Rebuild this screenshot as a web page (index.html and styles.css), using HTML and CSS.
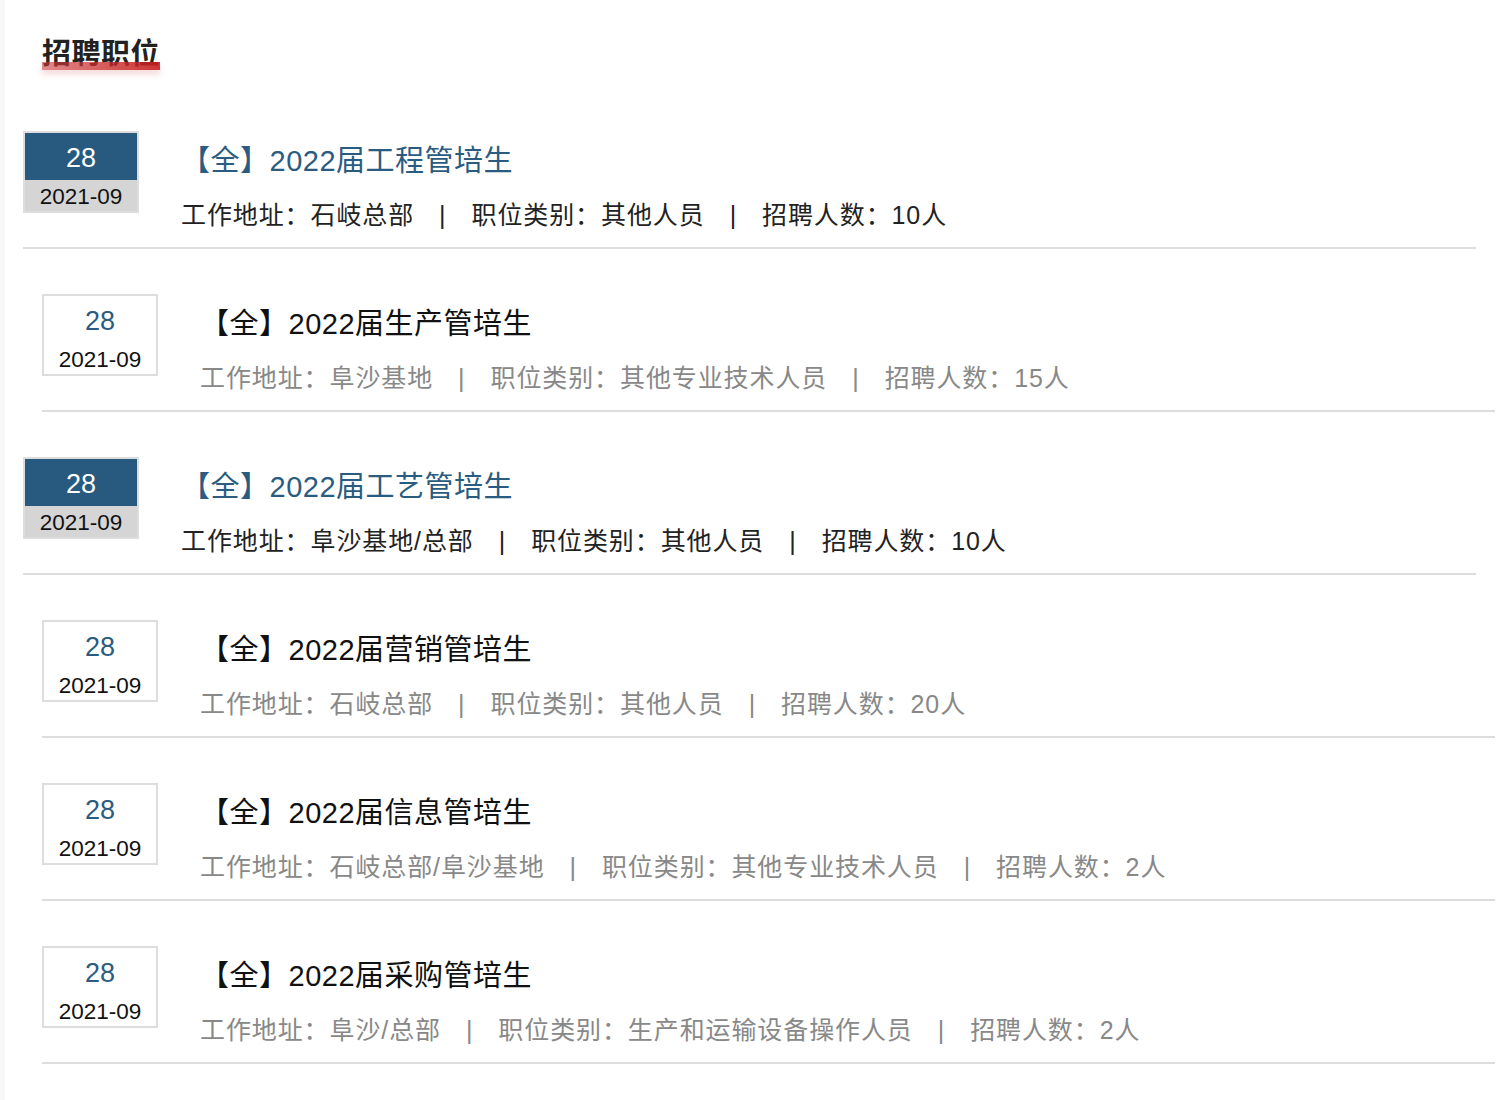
FILE: index.html
```html
<!DOCTYPE html>
<html lang="zh-CN">
<head>
    <meta charset="UTF-8">
    <meta name="viewport" content="width=device-width, initial-scale=1.0">
    <title>招聘职位</title>
    <link rel="stylesheet" href="styles.css">
</head>
<body>
    <div class="page">
        <h2 class="section-title"><span>招聘职位</span></h2>

        <ul class="job-list">
            <li class="job active">
                <div class="job-date">
                    <div class="day">28</div>
                    <div class="month">2021-09</div>
                </div>
                <div class="job-info">
                    <div class="job-name">【全】2022届工程管培生</div>
                    <div class="job-meta">
                        <span>工作地址：石岐总部</span><span class="sep">|</span><span>职位类别：其他人员</span><span class="sep">|</span><span>招聘人数：10人</span>
                    </div>
                </div>
            </li>
            <li class="job">
                <div class="job-date">
                    <div class="day">28</div>
                    <div class="month">2021-09</div>
                </div>
                <div class="job-info">
                    <div class="job-name">【全】2022届生产管培生</div>
                    <div class="job-meta">
                        <span>工作地址：阜沙基地</span><span class="sep">|</span><span>职位类别：其他专业技术人员</span><span class="sep">|</span><span>招聘人数：15人</span>
                    </div>
                </div>
            </li>
            <li class="job active">
                <div class="job-date">
                    <div class="day">28</div>
                    <div class="month">2021-09</div>
                </div>
                <div class="job-info">
                    <div class="job-name">【全】2022届工艺管培生</div>
                    <div class="job-meta">
                        <span>工作地址：阜沙基地/总部</span><span class="sep">|</span><span>职位类别：其他人员</span><span class="sep">|</span><span>招聘人数：10人</span>
                    </div>
                </div>
            </li>
            <li class="job">
                <div class="job-date">
                    <div class="day">28</div>
                    <div class="month">2021-09</div>
                </div>
                <div class="job-info">
                    <div class="job-name">【全】2022届营销管培生</div>
                    <div class="job-meta">
                        <span>工作地址：石岐总部</span><span class="sep">|</span><span>职位类别：其他人员</span><span class="sep">|</span><span>招聘人数：20人</span>
                    </div>
                </div>
            </li>
            <li class="job">
                <div class="job-date">
                    <div class="day">28</div>
                    <div class="month">2021-09</div>
                </div>
                <div class="job-info">
                    <div class="job-name">【全】2022届信息管培生</div>
                    <div class="job-meta">
                        <span>工作地址：石岐总部/阜沙基地</span><span class="sep">|</span><span>职位类别：其他专业技术人员</span><span class="sep">|</span><span>招聘人数：2人</span>
                    </div>
                </div>
            </li>
            <li class="job">
                <div class="job-date">
                    <div class="day">28</div>
                    <div class="month">2021-09</div>
                </div>
                <div class="job-info">
                    <div class="job-name">【全】2022届采购管培生</div>
                    <div class="job-meta">
                        <span>工作地址：阜沙/总部</span><span class="sep">|</span><span>职位类别：生产和运输设备操作人员</span><span class="sep">|</span><span>招聘人数：2人</span>
                    </div>
                </div>
            </li>
        </ul>
    </div>
</body>
</html>
```

FILE: styles.css
```css
body {
    margin: 0;
    background-color: #f7f7f7;
    font-family: "Liberation Sans", "Noto Sans CJK SC", sans-serif;
    color: #222;
}
.page {
    margin-left: 5px;
    min-height: 1100px;
    background-color: #fff;
    padding: 34px 16px 0 37px;
}
.section-title {
    margin: 0;
    font-size: 29px;
    line-height: 40px;
    letter-spacing: 0.5px;
    font-weight: bold;
    color: #222;
}
.section-title span {
    position: relative;
    display: inline-block;
}
.section-title span::after {
    content: "";
    position: absolute;
    left: 0;
    right: 0;
    top: 28px;
    height: 8px;
    background: linear-gradient(to right, rgba(205, 60, 60, 0.6), rgba(200, 30, 30, 0.9));
    box-shadow: 0 4px 6px rgba(220, 120, 120, 0.3);
}
.job-list {
    list-style: none;
    margin: 12px 0 0;
    padding: 0;
}
.job {
    display: flex;
    align-items: flex-start;
    padding: 45px 0 12px;
    border-bottom: 2px solid #ddd;
}
.job.active {
    margin-left: -19px;
    margin-right: 19px;
}
.job-date {
    width: 112px;
    border: 2px solid #ddd;
    text-align: center;
    flex-shrink: 0;
}
.job-date .day {
    height: 47px;
    line-height: 50px;
    font-size: 27px;
    color: #2a5c82;
}
.job-date .month {
    height: 31px;
    line-height: 34px;
    font-size: 22.5px;
    color: #111;
}
.job.active .job-date .day {
    background-color: #275a7e;
    color: #fff;
}
.job.active .job-date .month {
    background-color: #d5d5d5;
}
.job-info {
    margin-left: 42px;
    padding-top: 10px;
}
.job-name {
    font-size: 29px;
    line-height: 40px;
    letter-spacing: 0.5px;
    color: #111;
}
.job.active .job-name {
    color: #2a5c82;
}
.job-meta {
    margin-top: 14px;
    font-size: 25px;
    line-height: 40px;
    letter-spacing: 0.9px;
    color: #888;
}
.job.active .job-meta {
    color: #222;
}
.job-meta .sep {
    margin: 0 25px;
}
```
